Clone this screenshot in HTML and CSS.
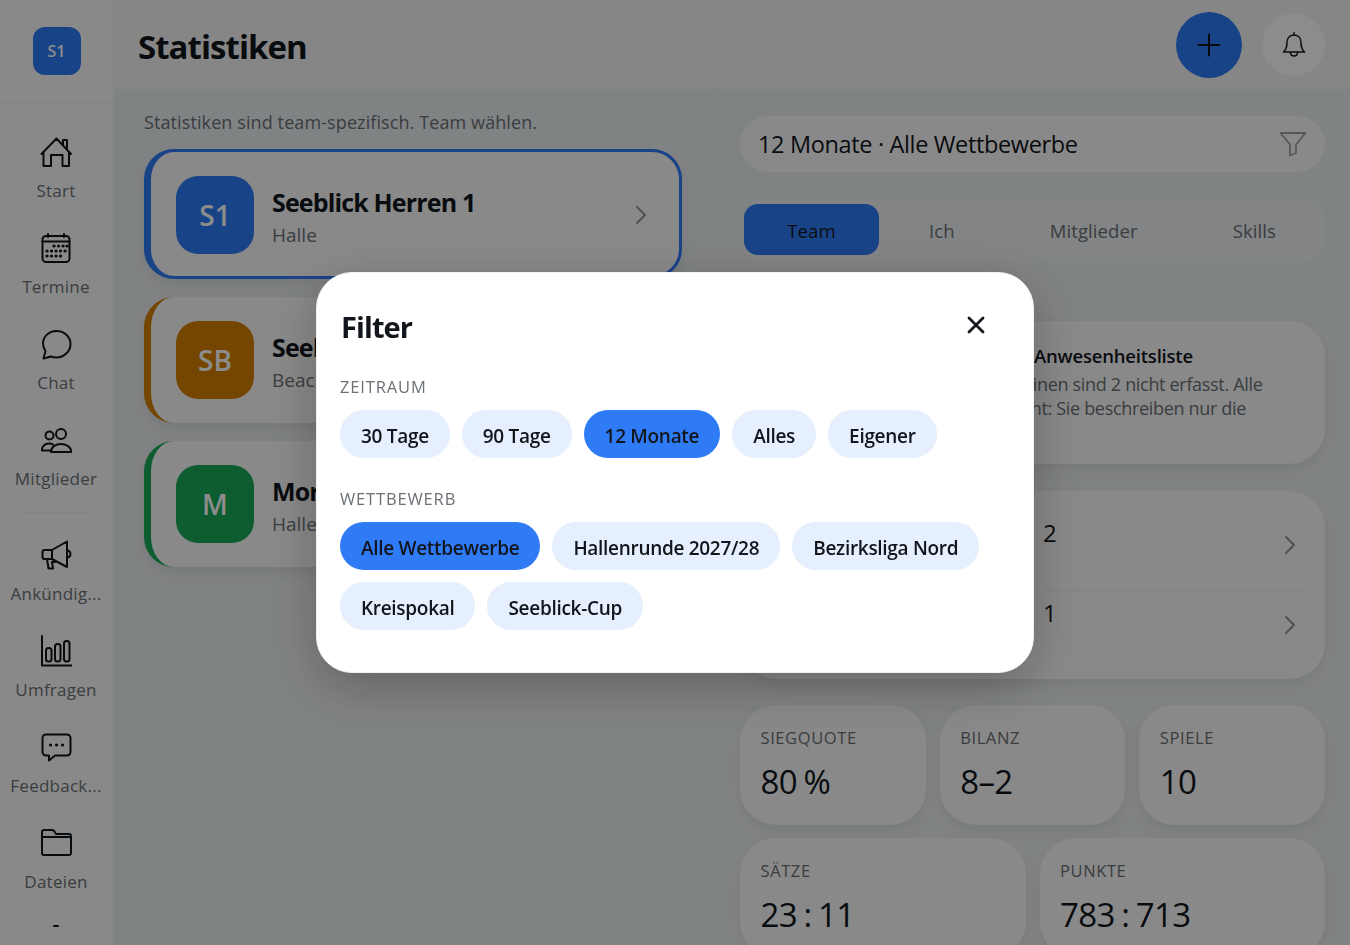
FILE: index.html
```html
<!DOCTYPE html>
<html lang="de">
<head>
    <meta charset="UTF-8">
    <meta name="viewport" content="width=device-width, initial-scale=1.0">
    <title>Statistiken</title>
    <link rel="stylesheet" href="styles.css">
</head>
<body>
    <div class="app">
        <aside class="sidebar">
            <div class="sidebar-top">
                <div class="logo">S1</div>
            </div>
            <nav class="nav">
                <a class="nav-item">
                    <svg class="nav-icon" viewBox="0 0 32 32"><path d="M1.500 18 16.500 2.500 31 18M3.500 16v14h7.500V19h11.500v11H29V16M23 9V4h4v9"/></svg>
                    <span>Start</span>
                </a>
                <a class="nav-item">
                    <svg class="nav-icon" viewBox="0 0 32 32"><rect x="2.500" y="4" width="27" height="26" rx="3.500"/><path d="M2.500 9.500h27M8 2v3M24 2v3"/><path class="dots" d="M14 14h.1M18.500 14h.1M23 14h.1M27 14h.1M7 19h.1M11.500 19h.1M16 19h.1M20.500 19h.1M25 19h.1M7 24h.1M11.500 24h.1M16 24h.1M20.500 24h.1"/></svg>
                    <span>Termine</span>
                </a>
                <a class="nav-item">
                    <svg class="nav-icon" viewBox="0 0 32 32"><path d="M16.500 3C9 3 3 8.500 3 15.500c0 3 1 5.500 2.500 7.500L3.500 30.500l7.500-2c1.700.7 3.500 1 5.500 1C24 29.500 30.500 23.500 30.500 16S24 3 16.500 3z"/></svg>
                    <span>Chat</span>
                </a>
                <a class="nav-item">
                    <svg class="nav-icon" viewBox="0 0 32 32"><circle cx="9.500" cy="11.500" r="4"/><circle cx="21" cy="10" r="5"/><path d="M10 26.500H2c-.5-4 3-7 7-7 1.500 0 3 .4 4 1M11 28c0-5 4.500-8 10-8s10 3 10.500 8z"/></svg>
                    <span>Mitglieder</span>
                </a>
                <div class="nav-divider"></div>
                <a class="nav-item">
                    <svg class="nav-icon" viewBox="0 0 32 32"><path d="M27 2.500 12 11H4.500A2 2 0 0 0 2.500 13v5a2 2 0 0 0 2 2H12l15 8zM12 11v9M7 20l1.500 9.500h4.500L12 23h3M28 11.500c1.500.5 2.500 2 2.500 3.500s-1 3-2.500 3.500"/></svg>
                    <span>Ankündig...</span>
                </a>
                <a class="nav-item">
                    <svg class="nav-icon" viewBox="0 0 32 32"><path d="M2 1v29.500h30"/><rect x="6" y="13" width="5.500" height="13.500" rx="2.500"/><rect x="15" y="9" width="5.500" height="17.500" rx="2.500"/><rect x="24" y="6" width="5.500" height="20.500" rx="2.500"/></svg>
                    <span>Umfragen</span>
                </a>
                <a class="nav-item">
                    <svg class="nav-icon" viewBox="0 0 32 32"><path d="M6 3.500h21a3.500 3.500 0 0 1 3.500 3.500v14a3.500 3.500 0 0 1-3.500 3.500H15l-6 5v-5H6A3.500 3.500 0 0 1 2.500 21V7A3.500 3.500 0 0 1 6 3.500z"/><path class="dots" d="M10.500 14h.1M16.500 14h.1M22.500 14h.1"/></svg>
                    <span>Feedback...</span>
                </a>
                <a class="nav-item">
                    <svg class="nav-icon" viewBox="0 0 32 32"><path d="M2 26V5a2 2 0 0 1 2-2h8c1 0 2 .5 2.500 1.500L16 7h13a2 2 0 0 1 2 2v17a2 2 0 0 1-2 2H4a2 2 0 0 1-2-2zM2 10h29"/></svg>
                    <span>Dateien</span>
                </a>
                <a class="nav-item">
                    <svg class="nav-icon" viewBox="0 0 32 32"><path d="M14 3h4"/></svg>
                </a>
            </nav>
        </aside>

        <div class="main">
            <header class="topbar">
                <h1>Statistiken</h1>
                <div class="topbar-actions">
                    <button class="add-btn">
                        <svg viewBox="0 0 24 24"><path d="M12 1.500v21M1.500 12h21"/></svg>
                    </button>
                    <button class="bell-btn">
                        <svg viewBox="0 0 24 24"><path d="M12 3.500c-4 0-6 3-6 6.500 0 4-1 6-3 8h18c-2-2-3-4-3-8 0-3.500-2-6.500-6-6.500zM12 3.500V1.500M9 18c0 2 1.300 3.500 3 3.500s3-1.500 3-3.500"/></svg>
                    </button>
                </div>
            </header>

            <div class="content">
                <section class="teams">
                    <p class="hint">Statistiken sind team-spezifisch. Team wählen.</p>
                    <div class="team-card selected">
                        <div class="avatar blue">S1</div>
                        <div class="team-text">
                            <strong>Seeblick Herren 1</strong>
                            <span>Halle</span>
                        </div>
                        <svg class="chevron" viewBox="0 0 12 20"><path d="M2 2l8 8-8 8"/></svg>
                    </div>
                    <div class="team-card orange">
                        <div class="avatar orange">SB</div>
                        <div class="team-text">
                            <strong>Seeblick Beach</strong>
                            <span>Beach</span>
                        </div>
                    </div>
                    <div class="team-card green">
                        <div class="avatar green">M</div>
                        <div class="team-text">
                            <strong>Mortal Kombat</strong>
                            <span>Halle</span>
                        </div>
                    </div>
                </section>

                <section class="stats">
                    <div class="filter-bar">
                        <span>12 Monate · Alle Wettbewerbe</span>
                        <svg viewBox="0 0 28 26"><path d="M1.500 2h25L17 13.500V22l-6 2.500V13.500z"/></svg>
                    </div>
                    <div class="tabs">
                        <a class="tab active">Team</a>
                        <a class="tab">Ich</a>
                        <a class="tab">Mitglieder</a>
                        <a class="tab">Skills</a>
                    </div>
                    <div class="card notice">
                        <strong>Anwesenheitsliste</strong>
                        <p>Terminen sind 2 nicht erfasst. Alle</p>
                        <p>Bericht: Sie beschreiben nur die</p>
                    </div>
                    <div class="card list">
                        <div class="list-row">
                            <span>2</span>
                            <svg class="chevron" viewBox="0 0 12 20"><path d="M2 2l8 8-8 8"/></svg>
                        </div>
                        <div class="list-row">
                            <span>1</span>
                            <svg class="chevron" viewBox="0 0 12 20"><path d="M2 2l8 8-8 8"/></svg>
                        </div>
                    </div>
                    <div class="stat-row">
                        <div class="card stat"><label>Siegquote</label><b>80 %</b></div>
                        <div class="card stat"><label>Bilanz</label><b>8–2</b></div>
                        <div class="card stat"><label>Spiele</label><b>10</b></div>
                    </div>
                    <div class="stat-row">
                        <div class="card stat"><label>Sätze</label><b>23 : 11</b></div>
                        <div class="card stat"><label>Punkte</label><b>783 : 713</b></div>
                    </div>
                </section>
            </div>
        </div>
    </div>

    <div class="overlay">
        <div class="modal">
            <div class="modal-head">
                <h2>Filter</h2>
                <svg class="close" viewBox="0 0 18 18"><path d="M2 2l14 14M16 2 2 16"/></svg>
            </div>
            <h3>Zeitraum</h3>
            <div class="chips">
                <button class="chip">30 Tage</button>
                <button class="chip">90 Tage</button>
                <button class="chip active">12 Monate</button>
                <button class="chip">Alles</button>
                <button class="chip">Eigener</button>
            </div>
            <h3>Wettbewerb</h3>
            <div class="chips">
                <button class="chip active">Alle Wettbewerbe</button>
                <button class="chip">Hallenrunde 2027/28</button>
                <button class="chip">Bezirksliga Nord</button>
                <button class="chip">Kreispokal</button>
                <button class="chip">Seeblick-Cup</button>
            </div>
        </div>
    </div>
</body>
</html>
```

FILE: styles.css
```css
:root {
    --primary: #2f7bf6;
    --text: #12161c;
    --muted: #6b7075;
    --card: #fafafa;
    --bg: #eaeef0;
    --line: #eceef0;
}

* {
    box-sizing: border-box;
}

html, body {
    height: 100%;
}

body {
    margin: 0;
    overflow: hidden;
    font-family: "Open Sans", "Noto Sans", sans-serif;
    color: var(--text);
    background: var(--bg);
}

svg {
    fill: none;
    stroke: currentColor;
    stroke-linecap: round;
    stroke-linejoin: round;
}

.app {
    display: flex;
    height: 100%;
    overflow: hidden;
}

/* sidebar */
.sidebar {
    width: 113px;
    flex: none;
    background: #fafafa;
    overflow: hidden;
}

.sidebar-top {
    height: 103px;
    padding-top: 27px;
    border-bottom: 1px solid var(--line);
}

.logo {
    width: 48px;
    height: 48px;
    margin: 0 auto;
    background: var(--primary);
    border-radius: 12px;
    color: #fff;
    font-size: 16px;
    font-weight: 600;
    display: flex;
    align-items: center;
    justify-content: center;
}

.nav {
    display: flex;
    flex-direction: column;
    align-items: center;
    padding: 33px 1px 0 0;
}

.nav-item {
    width: 100%;
    height: 96px;
    flex: none;
    display: flex;
    flex-direction: column;
    align-items: center;
    color: var(--muted);
    font-size: 17px;
    letter-spacing: 0.25px;
}

.nav-item span {
    margin-top: 11px;
    line-height: 24px;
}

.nav-icon {
    width: 32px;
    height: 32px;
    flex: none;
    color: var(--text);
    stroke-width: 2;
}

.nav-icon .dots {
    stroke-width: 3.200;
}

.nav-divider {
    width: 76px;
    height: 1px;
    margin: -8px 0 26px;
    flex: none;
    background: var(--line);
}

/* main */
.main {
    flex: 1;
    min-width: 0;
    display: flex;
    flex-direction: column;
}

.topbar {
    height: 90px;
    flex: none;
    display: flex;
    align-items: center;
    justify-content: space-between;
    padding: 0 25px;
    border-bottom: 1px solid var(--line);
    background: #f4f5f5;
}

.topbar h1 {
    margin: 4px 0 0;
    font-size: 33px;
    font-weight: 700;
    letter-spacing: -0.95px;
}

.topbar-actions {
    display: flex;
    align-items: center;
    gap: 20px;
}

.add-btn, .bell-btn {
    border: none;
    border-radius: 50%;
    padding: 0;
    display: flex;
    align-items: center;
    justify-content: center;
    color: var(--text);
}

.add-btn {
    width: 66px;
    height: 66px;
    background: var(--primary);
}

.add-btn svg {
    width: 24px;
    height: 24px;
    stroke-width: 2;
}

.bell-btn {
    width: 63px;
    height: 63px;
    background: #ffffff;
}

.bell-btn svg {
    width: 28px;
    height: 28px;
    stroke-width: 1.300;
}

.content {
    flex: 1;
    min-height: 0;
    display: flex;
}

/* teams */
.teams {
    width: 600px;
    flex: none;
    padding: 18px 30px 18px 31px;
    border-right: 1px solid var(--line);
}

.hint {
    margin: 0 0 13px;
    font-size: 18px;
    line-height: 28px;
    color: var(--muted);
    letter-spacing: 0.1px;
}

.team-card {
    height: 126px;
    display: flex;
    align-items: center;
    padding: 0 32px 0 25px;
    margin-bottom: 18px;
    border-left: 7px solid;
    border-radius: 30px;
    background: var(--card);
    box-shadow: 0 6px 16px rgba(0,0,0,0.08);
}

.team-card.selected {
    height: 130px;
    padding-top: 2px;
    border: 3px solid var(--primary);
    border-left-width: 7px;
}

.team-card.orange { border-color: #d68000; }
.team-card.green { border-color: #1aa958; }

.avatar {
    width: 78px;
    height: 78px;
    flex: none;
    border-radius: 22px;
    color: #fff;
    font-size: 28px;
    font-weight: 600;
    display: flex;
    align-items: center;
    justify-content: center;
}

.avatar.blue { background: var(--primary); }
.avatar.orange { background: #d68000; }
.avatar.green { background: #1aa958; }

.team-text {
    flex: 1;
    margin: 4px 0 0 18px;
    display: flex;
    flex-direction: column;
    gap: 2.500px;
}

.team-text strong {
    font-size: 25px;
    font-weight: 700;
    letter-spacing: -0.85px;
    line-height: 34px;
}

.team-text span {
    font-size: 19px;
    line-height: 28px;
    color: var(--muted);
}

.chevron {
    width: 12px;
    height: 20px;
    flex: none;
    color: #8f9499;
    stroke-width: 2;
}

/* stats */
.stats {
    flex: 1;
    min-width: 0;
    padding: 26px 25px 0 27px;
    display: flex;
    flex-direction: column;
}

.filter-bar {
    height: 56px;
    flex: none;
    display: flex;
    align-items: center;
    justify-content: space-between;
    padding: 0 18px;
    border-radius: 28px;
    background: var(--card);
    font-size: 23.500px;
    letter-spacing: -0.35px;
}

.filter-bar svg {
    width: 28px;
    height: 26px;
    color: #9aa0a5;
    stroke-width: 1.800;
}

.tabs {
    height: 62px;
    flex: none;
    margin: 27px 0 60px 4px;
    padding: 4px 0 5px;
    display: flex;
    gap: 5px;
    border: 1px solid rgba(255,255,255,0.35);
    border-left: none;
    border-radius: 22px;
    background: #edf0f2;
}

.tab {
    display: flex;
    align-items: center;
    justify-content: center;
    padding: 2px 45px 0;
    border-radius: 14px;
    font-size: 18.500px;
    color: var(--muted);
    letter-spacing: 0.1px;
}

.tab.active {
    width: 135px;
    padding: 2px 0 0;
    background: var(--primary);
    color: var(--text);
}

.card {
    background: var(--card);
    box-shadow: 0 6px 16px rgba(0,0,0,0.07);
}

.notice {
    height: 143px;
    flex: none;
    border-radius: 36px;
    padding: 22px 0 0 250px;
}

.notice strong {
    display: block;
    padding-left: 44px;
    font-size: 18.500px;
    font-weight: 600;
    line-height: 26px;
    letter-spacing: -0.2px;
}

.notice p {
    margin: 0;
    font-size: 18px;
    line-height: 24px;
    color: var(--muted);
    letter-spacing: -0.32px;
    white-space: nowrap;
}

.notice strong + p {
    margin-top: 3px;
}

.list {
    height: 188px;
    flex: none;
    margin: 27px 0 26px;
    border-radius: 36px;
    padding-left: 303px;
}

.list-row {
    height: 99px;
    display: flex;
    justify-content: space-between;
    padding: 26px 29px 0 0;
    font-size: 24px;
    line-height: 32px;
}

.list-row + .list-row {
    height: 89px;
    margin-right: 21px;
    padding-right: 8px;
    border-top: 1px solid var(--line);
    padding-top: 6px;
}

.list-row .chevron {
    margin-top: 18px;
}

.stat-row {
    display: flex;
    gap: 14px;
    margin-bottom: 13px;
    flex: none;
}

.stat {
    flex: 1;
    height: 120px;
    border-radius: 36px;
    padding: 21px 20.500px 0;
}

.stat label {
    display: block;
    font-size: 16.500px;
    line-height: 24px;
    color: var(--muted);
    text-transform: uppercase;
    letter-spacing: 0.6px;
}

.stat b {
    display: block;
    margin-top: 10px;
    font-size: 33px;
    font-weight: 500;
    line-height: 44px;
    letter-spacing: -0.6px;
    word-spacing: -1.500px;
}

/* filter dialog */
.overlay {
    position: fixed;
    inset: 0;
    display: flex;
    align-items: center;
    justify-content: center;
    background: rgba(0,0,0,0.45);
}

.modal {
    width: 718px;
    height: 401px;
    padding: 24px 24px 0;
    border: 1px solid #f2f2f2;
    border-radius: 36px;
    background: #fff;
    box-shadow: 0 14px 50px rgba(0,0,0,0.25);
}

.modal-head {
    display: flex;
    align-items: center;
    justify-content: space-between;
    height: 59px;
    padding-right: 24px;
}

.modal-head h2 {
    margin: 0;
    font-size: 29px;
    font-weight: 700;
    letter-spacing: -0.9px;
}

.close {
    width: 18px;
    height: 18px;
    margin-bottom: 4px;
    stroke-width: 2.800;
    color: var(--text);
}

.modal h3 {
    margin: 19px 0 11px -1px;
    font-size: 16.500px;
    font-weight: 400;
    line-height: 24px;
    color: var(--muted);
    text-transform: uppercase;
    letter-spacing: 0.85px;
}

.chips {
    display: flex;
    flex-wrap: wrap;
    gap: 12px;
    margin: 0 0 29px -1px;
}

.chip {
    height: 48px;
    padding: 3px 21px 0;
    border: none;
    border-radius: 24px;
    background: #e6effd;
    color: var(--text);
    font-family: inherit;
    font-size: 19px;
    font-weight: 600;
    letter-spacing: -0.3px;
}

.chip.active {
    background: var(--primary);
}
```
